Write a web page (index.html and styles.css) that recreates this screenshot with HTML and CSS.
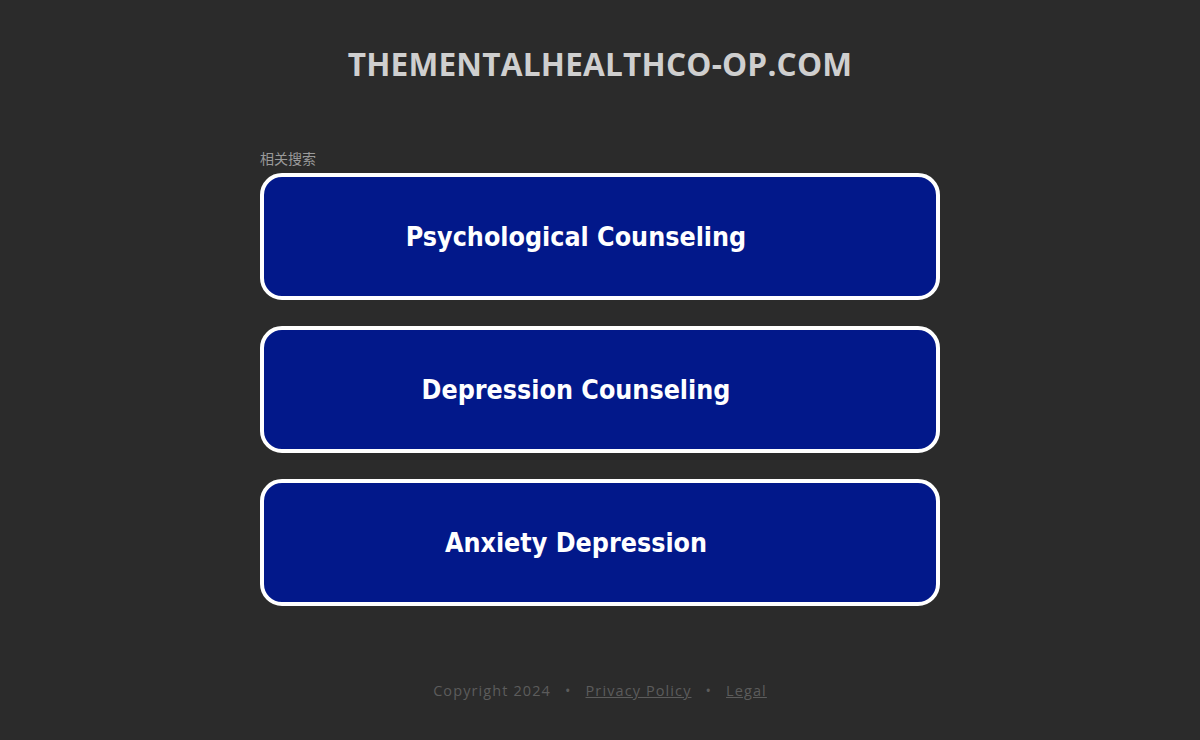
FILE: index.html
```html
<!DOCTYPE html>
<html>
<head>
<meta charset="utf-8">
<link rel="stylesheet" href="styles.css">
</head>
<body>
<div class="page">
  <header class="header"><h1 class="domain">THEMENTALHEALTHCO-OP.COM</h1></header>
  <main class="content">
    <div class="label">相关搜索</div>
    <div class="links">
      <a class="link" href="#"><span>Psychological Counseling</span></a>
      <a class="link" href="#"><span>Depression Counseling</span></a>
      <a class="link" href="#"><span>Anxiety Depression</span></a>
    </div>
  </main>
  <footer class="footer">
    <span>Copyright 2024</span><span class="dot">•</span><a href="#">Privacy Policy</a><span class="dot">•</span><a href="#">Legal</a>
  </footer>
</div>
</body>
</html>
```

FILE: styles.css
```css
html, body { margin: 0; padding: 0; }
body {
  background: #2b2b2b;
  width: 1200px;
  height: 740px;
  overflow: hidden;
  font-family: "Open Sans", "DejaVu Sans", sans-serif;
}
.page { display: flex; flex-direction: column; align-items: center; }
.header { padding-top: 44px; height: 104px; box-sizing: border-box; }
.domain {
  margin: 0;
  font-family: "Open Sans", sans-serif;
  font-weight: 700;
  font-size: 31.6px;
  line-height: 40px;
  color: #cfcfcf;
  letter-spacing: 0.2px;
}
.content { width: 680px; padding-top: 45px; }
.label {
  font-family: "Noto Sans CJK SC", sans-serif;
  font-size: 14px;
  line-height: 18px;
  color: #9a9a9a;
  margin-bottom: 6px;
}
.links { display: flex; flex-direction: column; gap: 26px; }
.link {
  display: flex;
  align-items: center;
  justify-content: center;
  height: 127px;
  box-sizing: border-box;
  border: 4px solid #ffffff;
  border-radius: 22px;
  background: #02188a;
  padding-right: 48px;
  text-decoration: none;
  color: #ffffff;
  font-family: "DejaVu Sans Condensed", "DejaVu Sans", sans-serif;
  font-stretch: condensed;
  font-weight: 700;
  font-size: 26.6px;
}
.footer {
  margin-top: 73px;
  font-family: "Open Sans", sans-serif;
  font-size: 14.5px;
  letter-spacing: 1.1px;
  color: #5c5c5c;
  line-height: 24px;
}
.footer a { color: #5c5c5c; text-decoration: underline; }
.dot { margin: 0 14px; }
```
